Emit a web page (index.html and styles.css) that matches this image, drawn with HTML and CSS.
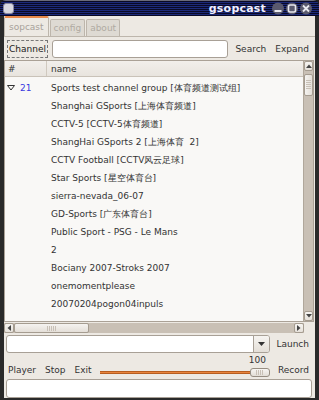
FILE: index.html
```html
<!DOCTYPE html>
<html>
<head>
<meta charset="utf-8">
<link rel="stylesheet" href="styles.css">
</head>
<body>
<div class="window">
  <div class="titlebar">
    <div class="appicon"></div>
    <div class="title">gsopcast</div>
    <div class="wbtns">
      <svg class="wbtn" width="14" height="13" viewBox="0 0 14 13"><circle cx="7" cy="6.5" r="6" fill="#5a5a6e"/><rect x="3.5" y="8" width="7" height="2" fill="#e8e8ee"/></svg>
      <svg class="wbtn" width="14" height="13" viewBox="0 0 14 13"><circle cx="7" cy="6.5" r="6" fill="#5a5a6e"/><rect x="3.5" y="3" width="7" height="7" rx="1.5" fill="none" stroke="#e8e8ee" stroke-width="1.6"/></svg>
      <svg class="wbtn" width="14" height="13" viewBox="0 0 14 13"><circle cx="7" cy="6.5" r="6" fill="#5a5a6e"/><path d="M4 3.5 L10 9.5 M10 3.5 L4 9.5" stroke="#e8e8ee" stroke-width="1.8"/></svg>
    </div>
  </div>
  <div class="body">
    <div class="tabs">
      <div class="tab active">sopcast</div>
      <div class="tab">config</div>
      <div class="tab">about</div>
    </div>
    <div class="page">
      <div class="row search">
        <div class="btn focus">Channel</div>
        <div class="entry grow"></div>
        <div class="lbl">Search</div>
        <div class="lbl">Expand</div>
      </div>
      <div class="tree">
        <div class="list">
          <div class="header">
            <div class="hcol num">#</div>
            <div class="hcol name">name</div>
          </div>
          <div class="rows">
            <div class="trow"><div class="c1"><span class="exp"><svg width="8" height="6" viewBox="0 0 8 6"><path d="M0.5 0.5 L7.5 0.5 L4 5 Z" fill="none" stroke="#333" stroke-width="1"/></svg></span><span class="id">21</span></div><div class="c2">Sports test channel group [体育频道测试组]</div></div>
            <div class="trow"><div class="c1"></div><div class="c2">Shanghai GSports [上海体育频道]</div></div>
            <div class="trow"><div class="c1"></div><div class="c2">CCTV-5 [CCTV-5体育频道]</div></div>
            <div class="trow"><div class="c1"></div><div class="c2">ShangHai GSports 2 [上海体育&nbsp;&nbsp;2]</div></div>
            <div class="trow"><div class="c1"></div><div class="c2">CCTV Football [CCTV风云足球]</div></div>
            <div class="trow"><div class="c1"></div><div class="c2">Star Sports [星空体育台]</div></div>
            <div class="trow"><div class="c1"></div><div class="c2">sierra-nevada_06-07</div></div>
            <div class="trow"><div class="c1"></div><div class="c2">GD-Sports [广东体育台]</div></div>
            <div class="trow"><div class="c1"></div><div class="c2">Public Sport - PSG - Le Mans</div></div>
            <div class="trow"><div class="c1"></div><div class="c2">2</div></div>
            <div class="trow"><div class="c1"></div><div class="c2">Bociany 2007-Stroks 2007</div></div>
            <div class="trow"><div class="c1"></div><div class="c2">onemomentplease</div></div>
            <div class="trow"><div class="c1"></div><div class="c2">20070204pogon04inpuls</div></div>
          </div>
        </div>
        <div class="vscroll">
          <div class="sarrow"><svg width="6" height="4" viewBox="0 0 6 4"><path d="M0 4 L3 0.5 L6 4 Z" fill="#444"/></svg></div>
          <div class="vthumb"><div class="grip"></div></div>
          <div class="trough"></div>
          <div class="sarrow"><svg width="6" height="4" viewBox="0 0 6 4"><path d="M0 0 L3 3.5 L6 0 Z" fill="#444"/></svg></div>
        </div>
      </div>
      <div class="hrow">
        <div class="hscroll">
          <div class="sarrow h"><svg width="4" height="6" viewBox="0 0 4 6"><path d="M4 0 L0.5 3 L4 6 Z" fill="#444"/></svg></div>
          <div class="hthumb"><div class="grip h"></div></div>
          <div class="htrough"></div>
          <div class="sarrow h"><svg width="4" height="6" viewBox="0 0 4 6"><path d="M0 0 L3.5 3 L0 6 Z" fill="#444"/></svg></div>
        </div>
      </div>
      <div class="row launch">
        <div class="combo grow">
          <div class="centry"></div>
          <div class="cbtn"><svg width="7" height="4" viewBox="0 0 7 4"><path d="M0 0 L7 0 L3.5 4 Z" fill="#333"/></svg></div>
        </div>
        <div class="lbl">Launch</div>
      </div>
      <div class="row controls">
        <div class="lbl">Player</div>
        <div class="lbl">Stop</div>
        <div class="lbl">Exit</div>
        <div class="slider grow">
          <div class="sval">100</div>
          <div class="strack">
            <div class="sfill"></div>
            <div class="sthumb"><div class="grip h small"></div></div>
          </div>
        </div>
        <div class="lbl rec">Record</div>
      </div>
      <div class="row status">
        <div class="entry grow tall"></div>
      </div>
    </div>
  </div>
</div>
</body>
</html>
```
FILE: styles.css
```css
* { box-sizing: border-box; }
html, body { margin: 0; padding: 0; }
body {
  width: 319px; height: 400px; overflow: hidden;
  font-family: "DejaVu Sans", sans-serif; font-size: 9px; color: #222;
  background: #1e1e1e;
}
.window {
  width: 319px; height: 400px;
  display: flex; flex-direction: column;
  background: #2a2a2a;
  border-radius: 6px 6px 0 0;
  overflow: hidden;
}
.titlebar {
  height: 16px; flex: none;
  display: flex; align-items: center;
  padding: 0 6px 0 3px;
  background:
    repeating-linear-gradient(to bottom, #0a0a26 0px, #0a0a26 1px, #1c2a7a 1px, #1c2a7a 2px);
  border-top: 1px solid #6a6a78;
}
.appicon {
  width: 11px; height: 11px; border-radius: 3px;
  background: #d8d8e0; border: 1px solid #8888a0;
}
.title {
  margin-left: auto; color: #f0f0ff; font-weight: bold; font-size: 11px;
  letter-spacing: 0.2px; margin-right: 5px;
}
.wbtns { display: flex; gap: 0; }
.wbtn { display: block; }
.body {
  flex: 1; display: flex; flex-direction: column;
  margin: 0 4px 4px 4px;
  background: #ede9e3;
}
.tabs { display: flex; height: 20px; flex: none; align-items: flex-end; }
.tab {
  height: 17px; padding: 0 3px; margin-right: 1px;
  border: 1px solid #bdb6ac; border-bottom: none; border-radius: 2px 2px 0 0;
  background: #dedad3; color: #b0aaa2;
  display: flex; align-items: center; font-size: 9px;
}
.tab.active {
  height: 20px; background: #ede9e3; color: #a8a29a;
  border-top: 2px solid #ea8a4a; padding: 0 4px;
}
.page {
  flex: 1; display: flex; flex-direction: column;
  border-top: 1px solid #bdb6ac;
  padding: 3px 0 0 0;
}
.row { display: flex; align-items: center; flex: none; }
.grow { flex: 1; }
.search { height: 18px; padding: 0 4px 0 3px; gap: 4px; }
.btn {
  height: 18px; padding: 0 1px; display: flex; align-items: center;
  border: 1px dashed #777; font-size: 9px; color: #222;
}
.entry {
  height: 18px; background: #fff; border: 1px solid #a8a096; border-radius: 3px;
}
.lbl { color: #333; font-size: 9px; padding: 0 2px; }
.search .lbl { margin-left: 1px; }
.tree {
  margin: 2px 1px 0 0; height: 262px; flex: none;
  display: flex; border: 1px solid #aaa196;
}
.list { flex: 1; background: #f9f8f6; overflow: hidden; display: flex; flex-direction: column; }
.header {
  height: 16px; flex: none; display: flex;
  background: linear-gradient(#f2efeb, #e8e4de);
  border-bottom: 1px solid #c9c2b8;
}
.hcol { display: flex; align-items: center; color: #333; }
.hcol.num { width: 42px; padding-left: 3px; border-right: 1px solid #d0c9bf; }
.hcol.name { padding-left: 4px; }
.rows { padding-top: 2px; }
.trow { height: 18px; display: flex; align-items: center; }
.c1 { width: 42px; display: flex; align-items: center; padding-left: 2px; }
.exp { width: 13px; display: flex; }
.id { color: #3a3ae0; }
.c2 { padding-left: 4px; white-space: nowrap; color: #333; }
.vscroll {
  width: 10px; flex: none; display: flex; flex-direction: column;
  background: #c9c0b5; border-left: 1px solid #b0a79b;
}
.sarrow {
  height: 10px; flex: none; background: linear-gradient(#f6f4f1, #e6e1da);
  border: 1px solid #a59c90; border-radius: 2px;
  display: flex; align-items: center; justify-content: center;
}
.sarrow.h { width: 10px; height: 10px; }
.vthumb {
  height: 22px; flex: none; margin-top: 3px;
  background: linear-gradient(to right, #f5f3f0, #e4dfd8);
  border: 1px solid #a59c90; border-radius: 2px;
  display: flex; align-items: center; justify-content: center;
}
.grip {
  width: 5px; height: 10px;
  background: repeating-linear-gradient(to bottom, #c8c0b6 0 1px, transparent 1px 2px);
}
.grip.h {
  width: 10px; height: 5px;
  background: repeating-linear-gradient(to right, #c8c0b6 0 1px, transparent 1px 2px);
}
.grip.small { width: 8px; height: 5px; }
.trough { flex: 1; }
.hrow { display: flex; flex: none; margin-top: 1px; padding-right: 11px; }
.hscroll {
  flex: 1; height: 10px; display: flex;
  background: #c9c0b5;
}
.hthumb {
  width: 75px; flex: none;
  background: linear-gradient(#f5f3f0, #e4dfd8);
  border: 1px solid #a59c90; border-radius: 2px;
  display: flex; align-items: center; justify-content: center;
}
.htrough { flex: 1; }
.launch { height: 18px; margin-top: 2px; padding: 0 4px 0 2px; gap: 4px; }
.combo {
  height: 18px; display: flex; background: #fff;
  border: 1px solid #a8a096; border-radius: 3px; overflow: hidden;
}
.centry { flex: 1; }
.cbtn {
  width: 16px; flex: none; display: flex; align-items: center; justify-content: center;
  background: linear-gradient(#f6f4f1, #e4dfd8); border-left: 1px solid #a8a096;
}
.controls { height: 22px; margin-top: 4px; padding: 0 4px 0 0; gap: 5px; }
.controls .lbl { padding: 0 2px; margin-top: 4px; }
.controls .lbl:first-child { padding-left: 4px; }
.slider { position: relative; height: 22px; margin-left: 1px; }
.sval { position: absolute; right: 4px; top: -2px; font-size: 9px; color: #333; }
.strack {
  position: absolute; left: 0; right: 0; bottom: 3px; height: 8px;
  display: flex; align-items: center;
}
.sfill {
  flex: 1; height: 3px; background: #e8843e; border: 1px solid #b85e20; border-width: 1px 0;
}
.sthumb {
  width: 20px; height: 9px; flex: none;
  background: linear-gradient(#f7f5f2, #e2ddd6);
  border: 1px solid #968d82; border-radius: 3px;
  display: flex; align-items: center; justify-content: center;
}
.rec { margin-left: 1px; }
.status { height: 19px; padding: 0 3px 0 2px; }
.entry.tall { height: 19px; }
```
